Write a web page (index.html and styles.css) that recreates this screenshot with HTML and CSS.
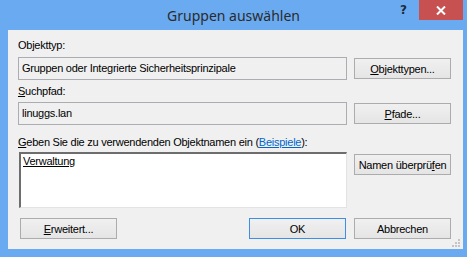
FILE: index.html
```html
<!DOCTYPE html>
<html>

<head>
    <title>Gruppen auswählen</title>
    <link rel="stylesheet" href="styles.css">
</head>

<body>
    <div class="window">
        <div class="titlebar">
            <div class="spacer"></div>
            <div class="title">Gruppen auswählen</div>
            <div class="controls">
                <span class="help">?</span>
                <span class="close">
                    <svg width="10" height="9" viewBox="0 0 10 9">
                        <path d="M1 0.5 L9 8.5 M9 0.5 L1 8.5" stroke="#fff" stroke-width="2" fill="none" />
                    </svg>
                </span>
            </div>
        </div>
        <div class="client">
            <div class="label">Objekttyp:</div>
            <div class="row">
                <div class="field">Gruppen oder Integrierte Sicherheitsprinzipale</div>
                <button class="btn"><u>O</u>bjekttypen...</button>
            </div>
            <div class="label second"><u>S</u>uchpfad:</div>
            <div class="row">
                <div class="field">linuggs.lan</div>
                <button class="btn"><u>P</u>fade...</button>
            </div>
            <div class="label third"><u>G</u>eben Sie die zu verwendenden Objektnamen ein (<a class="link">Beispiele</a>):</div>
            <div class="row top">
                <div class="names"><u>Verwaltung</u></div>
                <button class="btn check">Namen überprü<u>f</u>en</button>
            </div>
            <div class="footer">
                <button class="btn"><u>E</u>rweitert...</button>
                <div class="actions">
                    <button class="btn default">OK</button>
                    <button class="btn">Abbrechen</button>
                </div>
            </div>
            <svg class="grip" width="8" height="8" viewBox="0 0 8 8">
                <g fill="#c5c5c5">
                    <rect x="6" y="0" width="2" height="2" />
                    <rect x="3" y="3" width="2" height="2" />
                    <rect x="6" y="3" width="2" height="2" />
                    <rect x="0" y="6" width="2" height="2" />
                    <rect x="3" y="6" width="2" height="2" />
                    <rect x="6" y="6" width="2" height="2" />
                </g>
            </svg>
        </div>
    </div>
</body>

</html>
```

FILE: styles.css
```css
html,
body {
    margin: 0;
    padding: 0;
    width: 100%;
    height: 100%;
    overflow: hidden;
}

body {
    font-family: "Liberation Sans", Arial, sans-serif;
    font-size: 11px;
    letter-spacing: -0.25px;
    color: #000;
}

.window {
    width: 467px;
    height: 257px;
    box-sizing: border-box;
    background: #6aaaf1;
    padding: 0 4px 8px 8px;
    display: flex;
    flex-direction: column;
}

.titlebar {
    height: 30px;
    display: flex;
    margin-left: -8px;
    margin-right: -4px;
}

.spacer {
    width: 72px;
}

.title {
    flex: 1;
    text-align: center;
    font-family: "Noto Sans", "Open Sans", sans-serif;
    font-size: 14px;
    letter-spacing: 0;
    line-height: 30px;
    color: #2b2b2b;
    padding-top: 1px;
}

.controls {
    width: 72px;
    display: flex;
    align-items: flex-start;
}

.help {
    width: 24px;
    padding-left: 5px;
    box-sizing: border-box;
    font-family: "DejaVu Sans", sans-serif;
    font-weight: bold;
    font-size: 12px;
    letter-spacing: 0;
    line-height: 20px;
    color: #1e2a3a;
}

.close {
    width: 44px;
    height: 20px;
    background: #c75050;
    display: flex;
    align-items: center;
    justify-content: center;
}

.client {
    flex: 1;
    background: #f0f0f0;
    padding: 9px 12px 0 10px;
    position: relative;
}

.label {
    line-height: 13px;
    height: 13px;
    margin-bottom: 5px;
}

.label.second {
    margin-top: 5px;
    margin-bottom: 4px;
}

.label.third {
    margin-top: 11px;
    margin-bottom: 3px;
}

.row {
    display: flex;
    align-items: center;
    gap: 7px;
}

.row.top {
    align-items: flex-start;
}

.field {
    width: 329px;
    height: 23px;
    box-sizing: border-box;
    border: 1px solid #abadb3;
    line-height: 21px;
    padding-left: 3px;
    background: #f0f0f0;
    white-space: nowrap;
}

.names {
    width: 328px;
    height: 56px;
    box-sizing: border-box;
    margin-left: 1px;
    background: #fff;
    border-top: 2px solid #6d6d6d;
    border-left: 2px solid #6d6d6d;
    border-right: 1px solid #e3e3e3;
    border-bottom: 1px solid #e3e3e3;
    padding: 1px 2px;
    line-height: 13px;
}

.btn {
    width: 97px;
    height: 21px;
    box-sizing: border-box;
    border: 1px solid #acacac;
    background: linear-gradient(#f0f0f0, #e5e5e5);
    font-family: "Liberation Sans", Arial, sans-serif;
    font-size: 11px;
    letter-spacing: -0.25px;
    color: #000;
    padding: 0;
    margin: 0;
}

.btn.check {
    margin-top: 2px;
}

.btn.default {
    border-color: #3c8ee6;
}

.link {
    color: #0066cc;
    text-decoration: underline;
}

.footer {
    display: flex;
    justify-content: space-between;
    margin-top: 10px;
    padding-left: 2px;
}

.actions {
    display: flex;
    gap: 8px;
}

.grip {
    position: absolute;
    right: 3px;
    bottom: 2px;
}
```
